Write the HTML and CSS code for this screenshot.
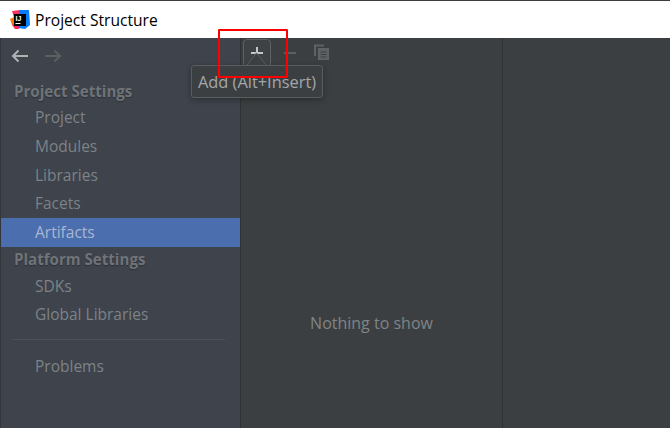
FILE: index.html
```html
<!DOCTYPE html>
<html>
<head>
  <title>Project Structure</title>
  <link rel="stylesheet" href="styles.css">
</head>
<body>

  <div class="titlebar">
    <svg class="logo" width="20" height="20" viewBox="0 0 20 20">
      <path d="M2 1 L10 0 L12 6 L5 11 Z" fill="#fe315d"/>
      <path d="M0 9 L6 6 L6 16 L2 15 Z" fill="#f97a12"/>
      <path d="M9 0 L19 0 L20 15 L15 19 L8 18 Z" fill="#087cfa"/>
      <path d="M2 15 L8 11 L9 19 L5 19 Z" fill="#fe2857"/>
      <rect x="4" y="4" width="12" height="12" fill="#000"/>
      <rect x="5.5" y="13" width="5" height="1" fill="#fff"/>
      <text x="5.5" y="11" class="logo-text">IJ</text>
    </svg>
    <span class="title">Project Structure</span>
  </div>

  <div class="window">
    <div class="sidebar">
      <div class="nav">
        <svg width="18" height="14" viewBox="0 0 18 14">
          <path d="M17 7 H2 M7.5 1.5 L2 7 L7.5 12.5" fill="none" stroke="#afb1b3" stroke-width="2"/>
        </svg>
        <svg width="18" height="14" viewBox="0 0 18 14">
          <path d="M1 7 H16 M10.5 1.5 L16 7 L10.5 12.5" fill="none" stroke="#5c5f61" stroke-width="2"/>
        </svg>
      </div>
      <div class="heading first">Project Settings</div>
      <div class="item">Project</div>
      <div class="item">Modules</div>
      <div class="item">Libraries</div>
      <div class="item">Facets</div>
      <div class="item selected">Artifacts</div>
      <div class="heading">Platform Settings</div>
      <div class="item short">SDKs</div>
      <div class="item">Global Libraries</div>
      <div class="sep"></div>
      <div class="item">Problems</div>
    </div>

    <div class="middle">
      <div class="toolbar">
        <div class="tool-btn">
          <svg width="14" height="14" viewBox="0 0 14 14">
            <path d="M7 1 V13 M1 7 H13" stroke="#c4c6c8" stroke-width="2"/>
          </svg>
        </div>
        <svg class="minus" width="14" height="14" viewBox="0 0 14 14">
          <path d="M1 7 H13" stroke="#5c5f61" stroke-width="2"/>
        </svg>
        <svg class="copy" width="18" height="18" viewBox="0 0 18 18">
          <path d="M2 12 V1.5 H11" fill="none" stroke="#5f6264" stroke-width="2"/>
          <rect x="5" y="4" width="11" height="12" fill="#5f6264"/>
          <path d="M7.5 8 H13.5 M7.5 10.5 H13.5 M7.5 13 H13.5" stroke="#3c3f41" stroke-width="1"/>
        </svg>
      </div>
      <div class="empty">Nothing to show</div>
    </div>

    <div class="right"></div>
  </div>

  <div class="tooltip">
    Add (Alt+Insert)
    <svg class="beak" width="22" height="14" viewBox="0 0 22 14">
      <path d="M1 13 L10.5 1 L20 13" fill="#3c3f41" stroke="#5a5d5f"/>
    </svg>
  </div>
  <div class="highlight"></div>

</body>
</html>
```

FILE: styles.css
```css
html, body {
  margin: 0;
  height: 100%;
  overflow: hidden;
}
body {
  font-family: "Open Sans", "Noto Sans", sans-serif;
  background: #3c3f41;
  display: flex;
  flex-direction: column;
}
.titlebar {
  height: 37px;
  border-top: 1px solid #3c3c3c;
  background: #fff;
  display: flex;
  align-items: center;
  padding-left: 10px;
  flex-shrink: 0;
}
.logo {
  margin-right: 5px;
}
.logo-text {
  font-family: "Liberation Sans", sans-serif;
  font-size: 7px;
  font-weight: bold;
  fill: #fff;
}
.title {
  font-size: 15.6px;
  color: #000;
}
.window {
  flex: 1;
  display: flex;
  min-height: 0;
}
.sidebar {
  width: 239px;
  border-left: 1px solid #33363a;
  background: #3e434c;
  border-right: 1px solid #2f3133;
  flex-shrink: 0;
}
.nav {
  height: 36px;
  display: flex;
  align-items: center;
  gap: 15px;
  padding-left: 10px;
}
.heading {
  height: 25px;
  line-height: 25px;
  padding-left: 13px;
  font-size: 15.1px;
  font-weight: 700;
  color: #6f7378;
  text-shadow: 0 1px 1px #2f3236;
}
.heading.first {
  height: 24px;
  margin-top: 5px;
}
.item {
  height: 28.8px;
  line-height: 28.8px;
  padding-left: 34px;
  font-size: 15.5px;
  color: #7d8287;
}
.item.short {
  height: 28px;
}
.item.selected {
  background: #4b6eaf;
  color: #a9b7cf;
}
.sep {
  height: 1px;
  background: #4c5058;
  margin: 10px 15px 12px 11px;
}
.middle {
  width: 261px;
  flex-shrink: 0;
  display: flex;
  flex-direction: column;
  border-right: 1px solid #2f3133;
}
.toolbar {
  height: 28px;
  display: flex;
  align-items: flex-start;
  padding: 1px 0 0 2px;
}
.tool-btn {
  width: 28px;
  height: 28px;
  border: 1px solid #5e6163;
  border-radius: 4px;
  display: flex;
  justify-content: center;
  padding-top: 6px;
  box-sizing: border-box;
  background: #3f4244;
}
.minus {
  margin: 7px 0 0 12px;
}
.copy {
  margin: 5px 0 0 16px;
}
.empty {
  flex: 1;
  text-align: center;
  padding-top: 245px;
  font-size: 16px;
  color: #7f8487;
}
.right {
  flex: 1;
}
.tooltip {
  position: absolute;
  left: 191px;
  top: 65px;
  width: 132px;
  height: 33px;
  box-sizing: border-box;
  background: #3c3f41;
  border: 1px solid #5a5d5f;
  border-radius: 3px;
  box-shadow: 0 2px 6px rgba(0, 0, 0, 0.3);
  font-size: 16.4px;
  line-height: 31px;
  text-align: center;
  white-space: nowrap;
  color: #a2a6a9;
}
.beak {
  position: absolute;
  left: 54px;
  top: -14px;
}
.highlight {
  position: absolute;
  left: 218px;
  top: 29px;
  width: 70px;
  height: 49px;
  box-sizing: border-box;
  border: 2px solid #f00;
  border-radius: 1px;
}
```
